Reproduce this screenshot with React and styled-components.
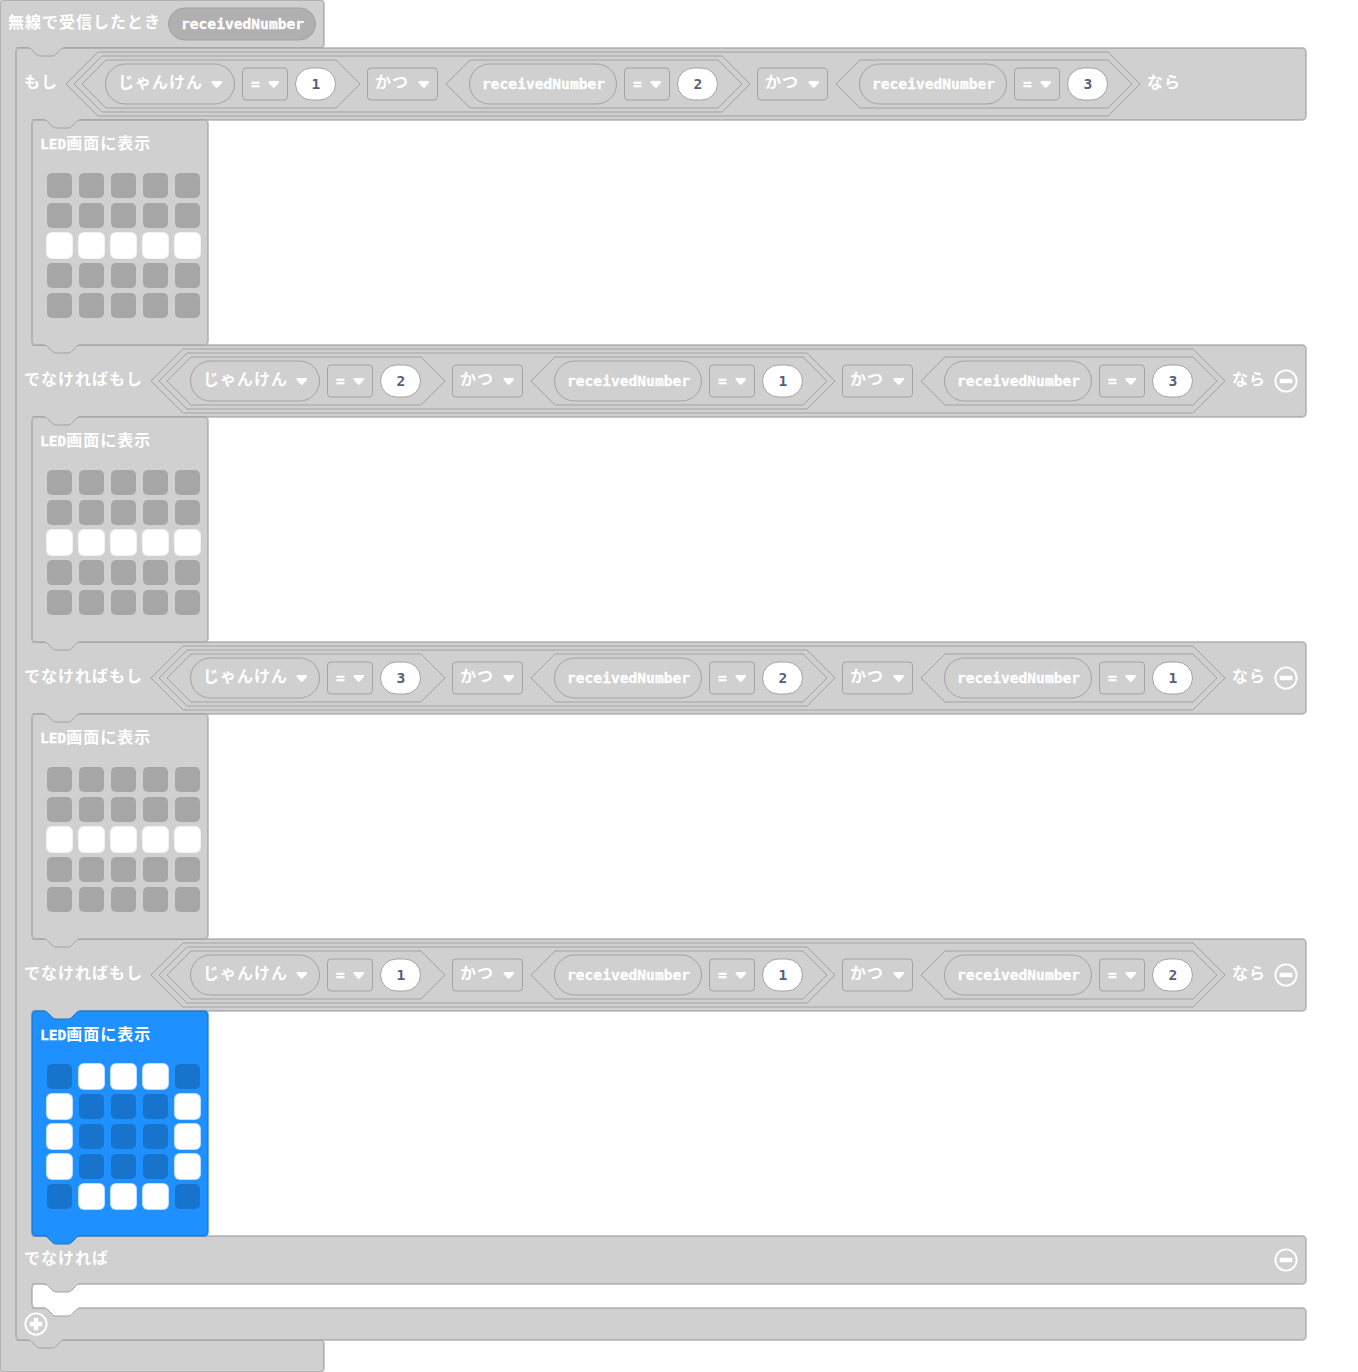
import React from "react";
import styled, { createGlobalStyle, css } from "styled-components";

const GREY = { fill: "#d0d0d0", edge: "#a2a2a2", line: "rgba(160,160,160,0.6)", off: "#a6a6a6" };
const BLUE = { fill: "#1e90ff", edge: "#1873cc", line: "rgba(24,115,204,0.6)", off: "#1873cc" };

const GlobalStyle = createGlobalStyle`
  * { box-sizing: border-box; }
  body { margin: 0; background: #fff; overflow: hidden; }
`;

const outline = (line) => css`
  box-shadow: 0 0 0 1px ${line}, inset 0 0 0 1px ${line};
`;

const Workspace = styled.main`
  width: 1358px;
  height: 1372px;
  overflow: hidden;
  background: #fff;
  color: #fff;
  font: bold 16px/24px "Noto Sans CJK JP", sans-serif;
`;

/* A block that wraps statements: a spine on the left, rows and mouths on the right. */
const Wrap = styled.div`
  position: relative;
  display: flex;
  width: ${(p) => p.$width}px;
`;

const Spine = styled.div`
  position: relative;
  flex: none;
  width: 16px;

  &::before {
    content: "";
    position: absolute;
    inset: 0 -4px 0 0;
    border-radius: 4px 0 0 4px;
    background: ${GREY.fill};
    clip-path: inset(-1px 4px -1px -1px);
    ${outline(GREY.line)}
  }
`;

const Stack = styled.div`
  flex: 1;
  min-width: 0;
  display: flex;
  flex-direction: column;
`;

const Row = styled.div`
  position: relative;
  z-index: 0;
  display: flex;
  align-items: center;
  gap: 8px;
  height: ${(p) => p.$height}px;
  padding-right: 8px;

  &::before {
    content: "";
    position: absolute;
    z-index: -1;
    inset: 0 0 0 -4px;
    border-radius: 0 4px 4px 0;
    background: ${GREY.fill};
    clip-path: inset(-1px -1px -1px 4px);
    ${outline(GREY.line)}
  }

  & > :first-child {
    margin-left: -8px;
  }
`;

const Mouth = styled.div`
  position: relative;
  z-index: 2;
  height: ${(p) => p.$height}px;
  background: linear-gradient(${GREY.fill}, ${GREY.fill}) 0 0 / 4px 100% no-repeat;
`;

const Gap = styled.div`
  height: 100%;
  margin-right: 3px;
  border-radius: 4px 0 0 4px;
  background: #fff;
  box-shadow: -1px 0 0 ${GREY.line}, inset 1px 0 0 ${GREY.line},
    inset 0 1px 0 ${GREY.line}, inset 0 -1px 0 ${GREY.line};
`;

const NotchSvg = styled.svg`
  position: absolute;
  z-index: 3;
  left: 12px;
  ${(p) => (p.$bottom ? "bottom: -10px;" : "top: 0;")}
  width: 36px;
  height: 10px;
  overflow: visible;
  pointer-events: none;
`;

const CURVE = "c2 0 3 1 4 2l4 4c1 1 2 2 4 2h12c2 0 3-1 4-2l4-4c1-1 2-2 4-2";

function Notch({ bottom, fill = GREY.fill, stroke = GREY.edge }) {
  return (
    <NotchSvg $bottom={bottom} viewBox="0 0 36 10">
      <path d={`M1 -1.2L0 0${CURVE}L35 -1.2Z`} fill={fill} />
      <path d={`M0 0${CURVE}`} fill="none" stroke={stroke} />
    </NotchSvg>
  );
}

const Label = styled.span`
  position: relative;
  top: ${(p) => p.$top ?? -3}px;
  margin-left: ${(p) => (p.$tight ? "-1px" : 0)};
  white-space: nowrap;
  letter-spacing: 1px;
`;

const Mono = styled.span`
  font: bold 14.6px/24px "DejaVu Sans Mono", monospace;
  letter-spacing: 0;
  color: ${(p) => p.$color || "inherit"};
  -webkit-text-stroke: ${(p) => (p.$color ? 0 : "0.3px")} currentColor;
`;

const Field = styled.span`
  position: relative;
  z-index: 0;
  display: flex;
  flex: none;
  align-items: center;
  gap: ${(p) => p.$gap || 8}px;
  height: ${(p) => p.$height || 32}px;
  width: ${(p) => p.$width}px;
  padding-left: ${(p) => p.$pad}px;

  &::before {
    content: "";
    position: absolute;
    z-index: -1;
    inset: -1px 0 0 -1px;
    transform: translateY(0.5px);
    border: 1px solid ${GREY.edge};
    border-radius: ${(p) => p.$radius || 99}px;
    background: ${(p) => p.$fill || "transparent"};
  }
`;

const ArrowSvg = styled.svg`
  flex: none;
  width: 11px;
  height: 7px;
`;

function Arrow() {
  return (
    <ArrowSvg viewBox="0 0 11 7">
      <path d="M1.9 0H9.6C11.1 0 11.4 1.4 10.5 2.3L6.9 6.2Q5.75 7.3 4.6 6.2L1 2.3C.1 1.4 .4 0 1.9 0Z" fill="#fff" />
    </ArrowSvg>
  );
}

const HexBox = styled.div`
  position: relative;
  display: flex;
  flex: none;
  align-items: center;
  gap: 8px;
  height: ${(p) => p.$h}px;
  padding: 0 ${(p) => p.$pad}px;

  &::before {
    content: "";
    position: absolute;
    inset: -1px ${(p) => p.$h / 2}px;
    border: solid #b9b9b9;
    border-width: 2px 0;
  }
`;

const Cap = styled.svg`
  position: absolute;
  top: 0;
  ${(p) => (p.$right ? "right: 0.5px;" : "left: -0.5px;")}
  overflow: visible;
`;

function Hex({ h, pad, children }) {
  const w = h / 2;
  return (
    <HexBox $h={h} $pad={pad}>
      <Cap width={w} height={h}>
        <path d={`M${w} 0L0 ${w}L${w} ${h}`} fill="none" stroke={GREY.edge} />
      </Cap>
      {children}
      <Cap $right width={w} height={h}>
        <path d={`M0 0L${w} ${w}L0 ${h}`} fill="none" stroke={GREY.edge} />
      </Cap>
    </HexBox>
  );
}

function Variable() {
  return (
    <Field $width={129} $height={40} $pad={12}>
      <Label>じゃんけん</Label>
      <Arrow />
    </Field>
  );
}

function Received({ height = 40, fill }) {
  return (
    <Field $width={147} $height={height} $pad={12} $fill={fill}>
      <Mono>receivedNumber</Mono>
    </Field>
  );
}

function Equals({ left, value }) {
  return (
    <Hex h={48} pad={24}>
      {left}
      <Field $width={45} $pad={8} $radius={4}>
        <Mono>=</Mono>
        <Arrow />
      </Field>
      <Field $width={40} $pad={15.5} $fill="#fff">
        <Mono $color="#575e75">{value}</Mono>
      </Field>
    </Hex>
  );
}

function And() {
  return (
    <Field $width={70} $pad={7} $gap={9} $radius={4}>
      <Label>かつ</Label>
      <Arrow />
    </Field>
  );
}

function Condition({ values }) {
  return (
    <Hex h={64} pad={8}>
      <Hex h={56} pad={8}>
        <Equals left={<Variable />} value={values[0]} />
        <And />
        <Equals left={<Received />} value={values[1]} />
      </Hex>
      <And />
      <Equals left={<Received />} value={values[2]} />
    </Hex>
  );
}

const IconSvg = styled.svg`
  flex: none;
  width: 24px;
  height: 24px;
  margin-left: ${(p) => (p.$end ? "auto" : 0)};
  margin-top: -1px;
`;

function RoundIcon({ plus, end }) {
  return (
    <IconSvg $end={end} viewBox="0 0 24 24">
      <circle cx="12" cy="12" r="10.6" fill="none" stroke="#fff" strokeWidth="1.9" />
      <path d={plus ? "M5.7 12H18.3M12 5.7V18.3" : "M5.7 12H18.3"} stroke="#fff" strokeWidth="4.4" />
    </IconSvg>
  );
}

const LedBlock = styled.section`
  position: relative;
  width: 176px;
  height: 225px;
  border-radius: 4px;
  background: ${(p) => p.$tone.fill};
  ${(p) => outline(p.$tone.line)}
`;

const LedTitle = styled.div`
  display: flex;
  align-items: center;
  height: 48px;
  padding-left: 8px;
`;

const LedGrid = styled.div`
  display: grid;
  grid-template-columns: repeat(5, 25px);
  grid-auto-rows: 25px;
  gap: 5px 7px;
  padding: 5px 0 0 15px;
`;

const Led = styled.i`
  border-radius: 5px;
  background: ${(p) => (p.$on ? "#fff" : p.$tone.off)};
  box-shadow: ${(p) => (p.$on ? "0 0 0 1px rgba(255,255,255,0.7)" : "none")};
`;

const DASH = "..... ..... ##### ..... .....";
const RING = ".###. #...# #...# #...# .###.";

function ShowLeds({ tone = GREY, pattern = DASH }) {
  return (
    <LedBlock $tone={tone}>
      <Notch stroke={tone.edge} />
      <LedTitle>
        <Label $top={-1}>
          <Mono>LED</Mono>画面に表示
        </Label>
      </LedTitle>
      <LedGrid>
        {[...pattern.replace(/ /g, "")].map((c, i) => (
          <Led key={i} $tone={tone} $on={c === "#"} />
        ))}
      </LedGrid>
      <Notch bottom fill={tone.fill} stroke={tone.edge} />
    </LedBlock>
  );
}

const BRANCHES = [
  { label: "もし", values: [1, 2, 3] },
  { label: "でなければもし", values: [2, 1, 3], removable: true },
  { label: "でなければもし", values: [3, 2, 1], removable: true },
  { label: "でなければもし", values: [1, 1, 2], removable: true, tone: BLUE, pattern: RING },
];

function IfBlock() {
  return (
    <Wrap $width={1290}>
      <Notch />
      <Spine />
      <Stack>
        {BRANCHES.map((b, i) => (
          <React.Fragment key={i}>
            <Row $height={72}>
              <Label>{b.label}</Label>
              <Condition values={b.values} />
              <Label $tight>なら</Label>
              {b.removable && <RoundIcon />}
            </Row>
            <Mouth $height={225}>
              <ShowLeds tone={b.tone} pattern={b.pattern} />
            </Mouth>
          </React.Fragment>
        ))}
        <Row $height={48}>
          <Label>でなければ</Label>
          <RoundIcon end />
        </Row>
        <Mouth $height={24}>
          <Notch />
          <Gap />
          <Notch bottom fill="#fff" />
        </Mouth>
        <Row $height={32}>
          <RoundIcon plus />
        </Row>
      </Stack>
      <Notch bottom />
    </Wrap>
  );
}

export default function App() {
  return (
    <Workspace>
      <GlobalStyle />
      <Wrap $width={324}>
        <Spine />
        <Stack>
          <Row $height={48}>
            <Label>無線で受信したとき</Label>
            <Received height={32} fill="#b0b0b0" />
          </Row>
          <Mouth $height={1292}>
            <IfBlock />
          </Mouth>
          <Row $height={32} />
        </Stack>
      </Wrap>
    </Workspace>
  );
}
